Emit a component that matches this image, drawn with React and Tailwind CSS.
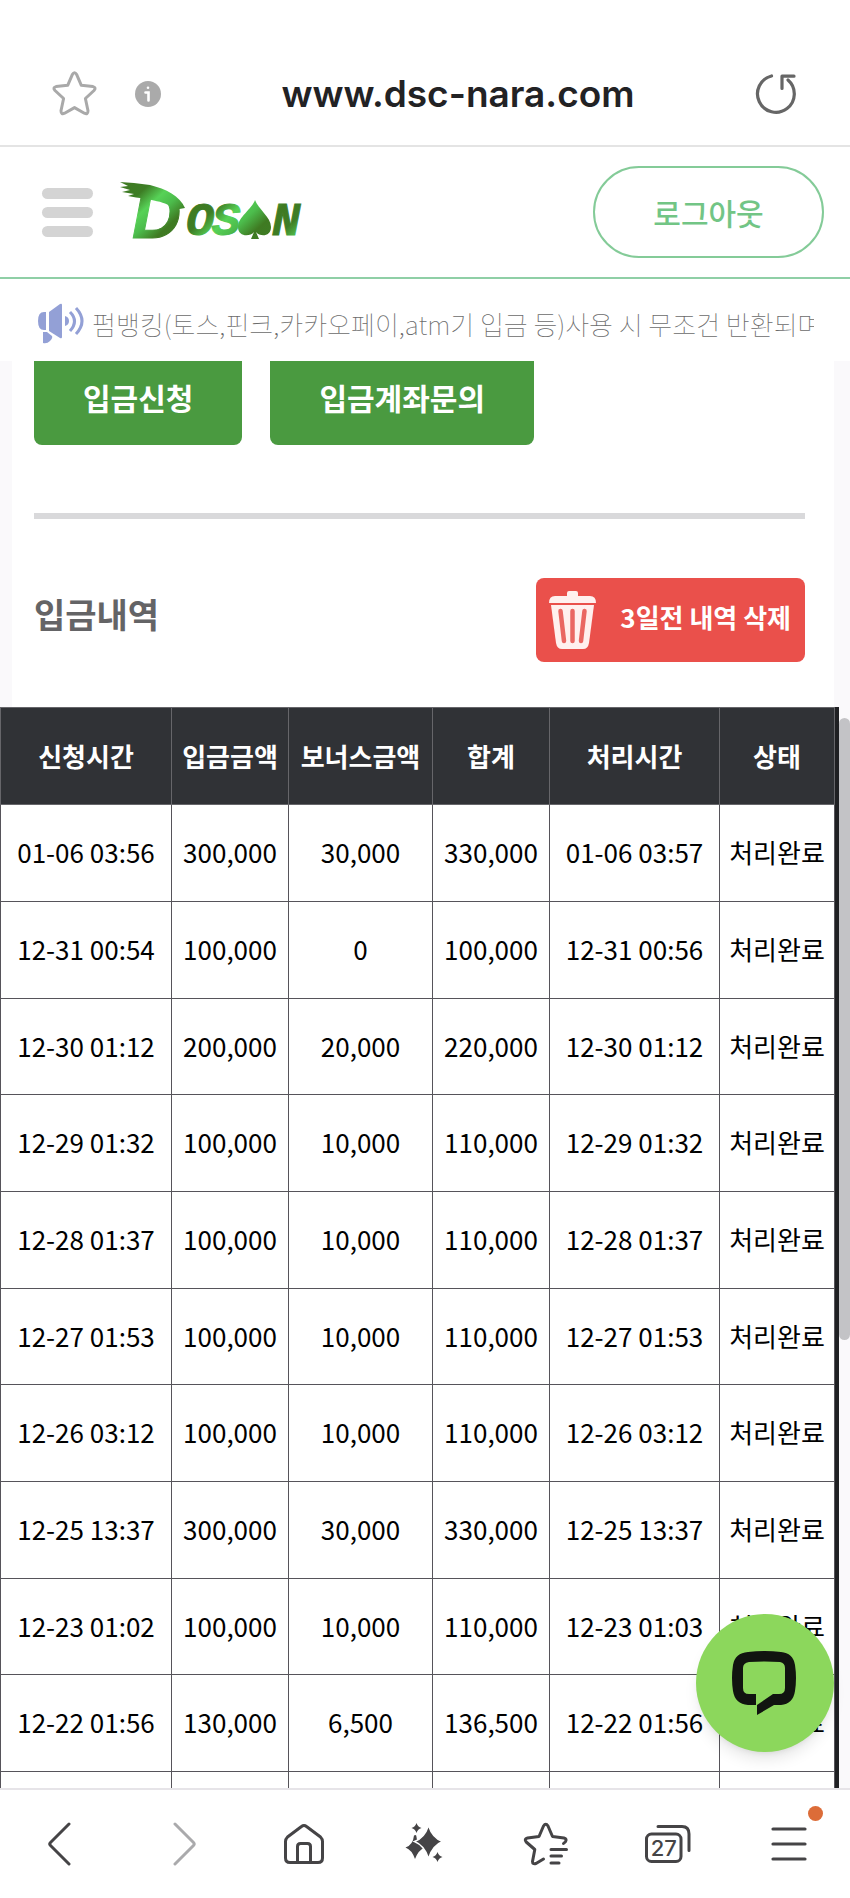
const columns = ['신청시간', '입금금액', '보너스금액', '합계', '처리시간', '상태']

const deposits = [
  ['01-06 03:56', '300,000', '30,000', '330,000', '01-06 03:57', '처리완료'],
  ['12-31 00:54', '100,000', '0', '100,000', '12-31 00:56', '처리완료'],
  ['12-30 01:12', '200,000', '20,000', '220,000', '12-30 01:12', '처리완료'],
  ['12-29 01:32', '100,000', '10,000', '110,000', '12-29 01:32', '처리완료'],
  ['12-28 01:37', '100,000', '10,000', '110,000', '12-28 01:37', '처리완료'],
  ['12-27 01:53', '100,000', '10,000', '110,000', '12-27 01:53', '처리완료'],
  ['12-26 03:12', '100,000', '10,000', '110,000', '12-26 03:12', '처리완료'],
  ['12-25 13:37', '300,000', '30,000', '330,000', '12-25 13:37', '처리완료'],
  ['12-23 01:02', '100,000', '10,000', '110,000', '12-23 01:03', '처리완료'],
  ['12-22 01:56', '130,000', '6,500', '136,500', '12-22 01:56', '처리완료'],
  ['', '', '', '', '', ''],
]

function Logo() {
  return (
    <svg width="182" height="57" viewBox="0 0 182 57" className="overflow-visible">
      <defs>
        <linearGradient id="leaf" gradientUnits="userSpaceOnUse" x1="4" y1="0" x2="46" y2="46" spreadMethod="repeat">
          <stop offset="0" stopColor="#3f7a22" />
          <stop offset="0.3" stopColor="#3d7d25" />
          <stop offset="0.55" stopColor="#57d257" />
          <stop offset="0.75" stopColor="#4cbc4c" />
          <stop offset="1" stopColor="#3f7a22" />
        </linearGradient>
      </defs>
      <g fill="url(#leaf)" stroke="url(#leaf)" fontWeight="700" fontStyle="italic">
        {/* brush sweep over the first letter */}
        <path stroke="none" d="M0 0L14 1L30 3C46 7 60 14 65 26L54 28C48 19 30 18 8 14L14 12L2 10L10 8L0 5L8 4Z" />
        <text x="12" y="56" fontSize="68" strokeWidth="1" fontFamily="'Liberation Sans', sans-serif">D</text>
        <g strokeWidth="1" fontSize="47" fontFamily="'Liberation Mono', monospace">
          <text x="66" y="53">O</text>
          <text x="92" y="53">S</text>
          <text x="152" y="53">N</text>
        </g>
        <path stroke="none" d="M135 18C138 27 151 35 151 45C151 55 140 55 136 50L139 57H131L134 50C130 55 118 55 118 45C118 35 132 27 135 18Z" />
      </g>
    </svg>
  )
}

function BrowserBar() {
  return (
    <div className="flex items-center justify-between border-b-2 border-[#e4e4e4] pl-[52px] pr-[53px] pt-[68px] pb-[26px]">
      <div className="flex items-center gap-[38px]">
        <button aria-label="북마크">
          <svg width="45" height="45" viewBox="0 0 45 45" fill="none" stroke="#a9a9a9" strokeWidth="3" strokeLinejoin="round">
            <path d="M20.3 3.6Q22.5 0 24.7 3.6L29.2 14.2L41 15.6Q44.6 16.6 42 19.5L33.4 27.5L36 39.8Q36 43.8 32.4 42.2L22.5 36.6L12.6 42.2Q9 43.8 9 39.8L11.6 27.5L3 19.5Q.4 16.6 4 15.6L15.8 14.2Z" />
          </svg>
        </button>
        <button aria-label="사이트 정보">
          <svg width="26" height="26" viewBox="0 0 26 26">
            <circle cx="13" cy="13" r="13" fill="#aaaaaa" />
            <g stroke="#fff" strokeWidth="2.6" strokeLinecap="round" fill="none">
              <path d="M10.5 11.5H13.5V19.5" />
              <path d="M13 6.7V6.8" />
            </g>
          </svg>
        </button>
      </div>
      <h1 className="font-[Inter,sans-serif] text-[37px] leading-[51px] font-semibold text-[#222224]">www.dsc-nara.com</h1>
      <button aria-label="새로고침">
        <svg width="42" height="42" viewBox="0 0 42 42" fill="none" stroke="#666" strokeWidth="3.2" strokeLinecap="round" strokeLinejoin="round">
          <path d="M16.5 3A18.4 18.4 0 1 0 33 7" />
          <path d="M27 15.5V3.2H39" />
        </svg>
      </button>
    </div>
  )
}

function SiteHeader() {
  return (
    <header className="flex items-center justify-between border-b-2 border-[#8fcfa6] py-[19px] pl-[42px] pr-[26px]">
      <div className="flex items-center gap-[27px]">
        <button aria-label="메뉴" className="flex flex-col gap-2">
          <span className="h-[11px] w-[51px] rounded-full bg-[#d4d4d4]" />
          <span className="h-[11px] w-[51px] rounded-full bg-[#d4d4d4]" />
          <span className="h-[11px] w-[51px] rounded-full bg-[#d4d4d4]" />
        </button>
        <a href="#home" aria-label="홈" className="-mt-1"><Logo /></a>
      </div>
      <button className="h-[92px] w-[231px] rounded-full border-2 border-[#84cb98] text-[30px] font-medium text-[#72c585]">로그아웃</button>
    </header>
  )
}

function Notice() {
  return (
    <div className="flex h-[82px] shrink-0 items-center gap-2 pt-2 pl-[38px] pr-9">
      <svg className="shrink-0" width="46" height="42" viewBox="0 0 46 42" fill="#93a0d6">
        <path d="M8 9H6Q0 9 0 18Q0 27 6 27H8Z" />
        <path d="M11 9L22 1Q24 0 24 2V34Q24 36 22 35L11 28Z" />
        <path d="M5 29H9L14 33Q15 35 12 38Q9 41 5 40Z" />
        <path d="M27 13Q31 14 31 18Q31 22 27 23Z" />
        <path d="M32 9Q41 18 32 28M38 5Q50 18 38 31" fill="none" stroke="#93a0d6" strokeWidth="3" />
      </svg>
      <p className="overflow-hidden text-[26px] leading-[38px] font-thin whitespace-nowrap text-[#6b6b6b]">
        펌뱅킹(토스,핀크,카카오페이,atm기 입금 등)사용 시 무조건 반환되며
      </p>
    </div>
  )
}

function DepositTable() {
  return (
    <div className="border-r-4 border-[#1f2023] bg-white">
      <table className="w-full table-fixed border-collapse text-center text-[26px] leading-[38px] whitespace-nowrap text-black">
        <colgroup>
          <col className="w-[171px]" />
          <col className="w-[117px]" />
          <col className="w-[144px]" />
          <col className="w-[117px]" />
          <col className="w-[170px]" />
          <col />
        </colgroup>
        <thead>
          <tr className="h-[97px] bg-[#303236] text-white">
            {columns.map((name) => (
              <th key={name} className="border border-[#66666a] font-bold">{name}</th>
            ))}
          </tr>
        </thead>
        <tbody>
          {deposits.map((row, i) => (
            <tr key={i} className="h-[97px] nth-[3n]:h-24">
              {row.map((cell, j) => (
                <td key={j} className="border border-[#56545a] pb-0.5">{cell}</td>
              ))}
            </tr>
          ))}
        </tbody>
      </table>
    </div>
  )
}

function BottomNav() {
  return (
    <nav className="grid h-[110px] shrink-0 grid-cols-7 place-items-center border-t-2 border-[#e6e4e8] text-[#454446]">
      <button aria-label="뒤로">
        <svg width="44" height="44" viewBox="0 0 44 44" fill="none" stroke="currentColor" strokeWidth="3" strokeLinecap="round" strokeLinejoin="round">
          <path d="M30 2L11.5 20.5Q10 22 11.5 23.5L30 42" />
        </svg>
      </button>
      <button aria-label="앞으로" className="text-[#aaaaac]">
        <svg width="44" height="44" viewBox="0 0 44 44" fill="none" stroke="currentColor" strokeWidth="3" strokeLinecap="round" strokeLinejoin="round">
          <path d="M15 2L33.5 20.5Q35 22 33.5 23.5L15 42" />
        </svg>
      </button>
      <button aria-label="홈">
        <svg width="42" height="42" viewBox="0 0 42 42" fill="none" stroke="currentColor" strokeWidth="3" strokeLinecap="round" strokeLinejoin="round">
          <path d="M18.5 3.5Q21 1.5 23.5 3.5L37.5 14Q39.5 16 39.5 18.5V35Q39.5 39.5 35 39.5H7Q2.5 39.5 2.5 35V18.5Q2.5 16 4.5 14Z" />
          <path d="M14.5 39V23.5Q14.5 20.5 17.5 20.5H24.5Q27.5 20.5 27.5 23.5V39" />
        </svg>
      </button>
      <button aria-label="AI 도우미">
        <svg width="40" height="42" viewBox="0 0 40 42" fill="currentColor">
          <path d="M9 12.5Q11.500 11 11.500 14L12 17L10.500 18.500L19 25Q13.500 27 10 36Q7 27 .5 24.500Q8 22 9 12.500Z" />
          <path d="M23.500 2.500Q27.500 15 37.500 18.500Q27.500 22.500 23.500 35.500Q19.500 22.500 9.500 18.500Q19.500 15 23.500 2.500Z" stroke="#fff" strokeWidth="1.500" />
          <path d="M11.500 0Q12.700 3.800 16.500 5Q12.700 6.200 11.500 10Q10.300 6.200 6.500 5Q10.300 3.800 11.500 0Z" />
          <path d="M32.500 29Q33.700 32.800 37.500 34Q33.700 35.200 32.500 39Q31.300 35.200 27.500 34Q31.300 32.800 32.500 29Z" />
        </svg>
      </button>
      <button aria-label="북마크 목록">
        <svg width="46" height="44" viewBox="0 0 46 44" fill="none" stroke="currentColor" strokeWidth="3" strokeLinecap="round" strokeLinejoin="round">
          <path d="M20.5 37L13 41.5Q9.5 42.5 9.5 39.5L11.8 27.5L3.2 20Q.8 17 4.5 16L16 14.5L20.5 4Q22.8 .5 25 4L29.5 14.5L41 16Q44.5 17 42.2 20L40.5 21.5" />
          <path d="M28 27.5H43.5M28 34H38.5M28 41H36" />
        </svg>
      </button>
      <button aria-label="탭 27개">
        <svg width="48" height="42" viewBox="0 0 48 42" fill="none" stroke="currentColor" strokeWidth="3" strokeLinecap="round">
          <rect x="2.5" y="11" width="34.5" height="27.5" rx="5" />
          <path d="M14 3.5H38Q45 3.5 45 11V27.5" />
          <text x="19.7" y="32.5" textAnchor="middle" fill="currentColor" stroke="none" fontSize="22" fontWeight="500" fontFamily="Inter, sans-serif">27</text>
        </svg>
      </button>
      <button aria-label="더보기" className="relative">
        <svg width="36" height="36" viewBox="0 0 36 36" stroke="currentColor" strokeWidth="3.2" strokeLinecap="round">
          <path d="M2 3H34M2 18H34M2 33H34" />
        </svg>
        <span className="absolute -top-5 -right-4 size-[15px] rounded-full bg-[#dc6c38]" />
      </button>
    </nav>
  )
}

export default function App() {
  return (
    <div className="relative flex h-screen flex-col overflow-hidden bg-white font-['Noto_Sans_CJK_KR',sans-serif]">
      <BrowserBar />
      <SiteHeader />
      <Notice />

      <div className="relative min-h-0 flex-1 overflow-hidden bg-[#faf9fb] pr-[11px]">
        <main>
          <div className="mr-[5px] ml-3 bg-white pr-[29px] pb-[45px] pl-[22px]">
            <div className="-mt-2 flex gap-7">
              <button className="h-[92px] rounded-lg bg-[#4a9a40] px-[49px] pb-1 text-[30px] font-bold text-white">입금신청</button>
              <button className="h-[92px] rounded-lg bg-[#4a9a40] px-[49px] pb-1 text-[30px] font-bold text-white">입금계좌문의</button>
            </div>
            <hr className="mt-[68px] border-t-[6px] border-[#d9d9db]" />
            <div className="mt-[59px] flex items-center justify-between">
              <h2 className="pb-3 text-[34px] leading-[50px] font-bold text-[#646466]">입금내역</h2>
              <button className="flex h-[84px] items-center gap-6 rounded-lg bg-[#ea504b] pr-[14px] pl-[13px] text-[26px] leading-[38px] font-bold text-white">
                <svg width="47" height="58" viewBox="0 0 47 58">
                  <path d="M18 5V2Q18 0 20 0H27Q29 0 29 2V5H41Q47 5 47 12H0Q0 5 6 5Z" fill="#fff0ee" />
                  <path d="M2 14H45L40 52Q39 58 34 58H13Q8 58 7 52Z" fill="#fff0ee" />
                  <path d="M11.5 20L15 50M23.5 20V50M35.5 20L32 50" stroke="#ea6762" strokeWidth="4.5" strokeLinecap="round" />
                </svg>
                <span className="pb-1.5">3일전 내역 삭제</span>
              </button>
            </div>
          </div>
          <DepositTable />
        </main>
        <div className="absolute top-1/4 right-0 h-[622px] w-[11px] rounded-full bg-[#c3c3c6]" />
      </div>

      <button aria-label="채팅 상담" className="absolute right-4 bottom-[146px] flex size-[138px] items-center justify-center rounded-full bg-[#8cd75c] shadow-lg">
        <svg width="66" height="64" viewBox="0 0 66 64">
          <path d="M16 1Q33 -1 49 1Q61 2 63 14Q65 27 63 40Q61 53 49 54H42L25 64V54L41 43H47Q53 43 53 37V17Q53 12 48 11Q33 10 17 11Q11 12 11 17V37Q11 43 17 43H24V54H16Q3 53 1 40Q-1 27 1 14Q3 2 16 1Z" fill="#111410" />
        </svg>
      </button>
      <BottomNav />
    </div>
  )
}
